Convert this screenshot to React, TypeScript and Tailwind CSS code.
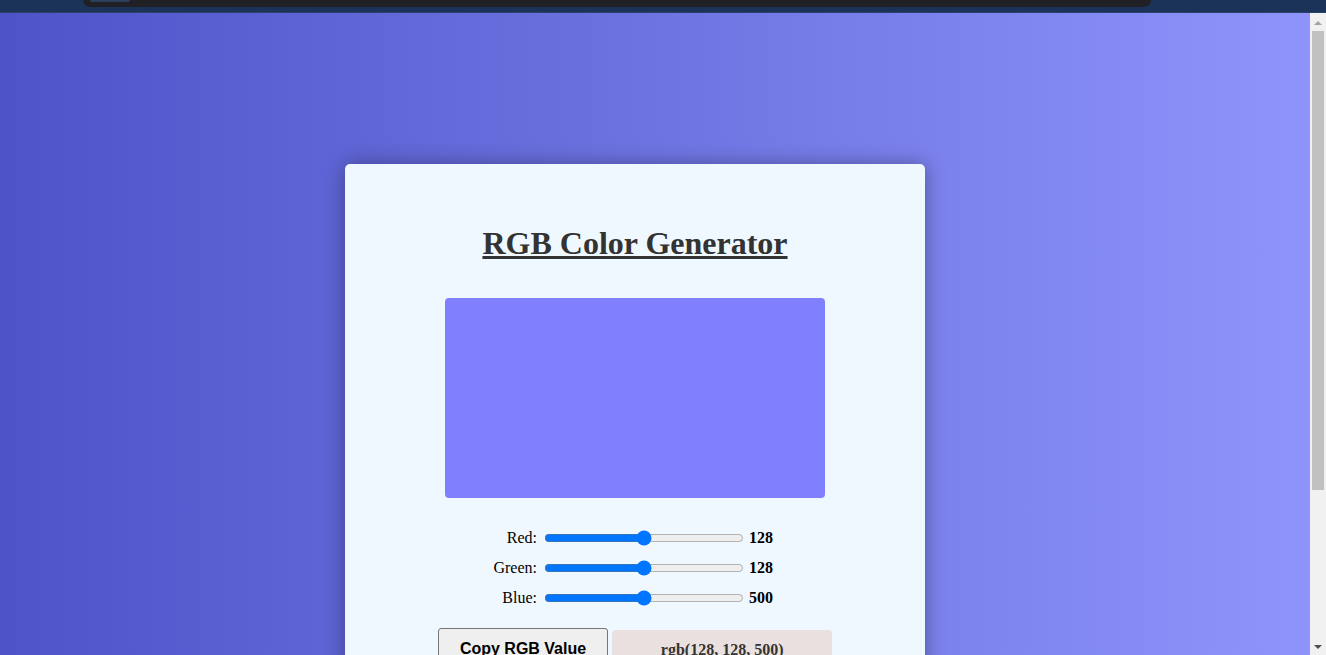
import { useState } from "react";

const serif = { fontFamily: '"Liberation Serif", "Times New Roman", serif' };

function SliderRow({
  label,
  max,
  value,
  onChange,
}: {
  label: string;
  max: number;
  value: number;
  onChange: (v: number) => void;
}) {
  return (
    <div className="flex h-[30px] items-center">
      <label className="w-[92px] text-right text-[16px] text-black">{label}</label>
      <input
        type="range"
        min={0}
        max={max}
        value={value}
        onChange={(e) => onChange(Number(e.target.value))}
        className="ml-[7px] m-0 h-[16px] w-[200px]"
      />
      <span className="ml-[5px] text-[16px] font-bold text-black">{value}</span>
    </div>
  );
}

function TopStrip() {
  return (
    <div className="relative h-[13px] shrink-0 border-b border-[#2a4168] bg-[#1b3358]">
      <div className="absolute left-[83px] top-0 h-[7px] w-[1068px] rounded-b-[8px] bg-[#202124]">
        <div className="ml-[7px] h-[2px] w-[40px] rounded-b-[4px] bg-[#2c3e5c]" />
      </div>
    </div>
  );
}

function FakeScrollbar() {
  return (
    <div className="flex w-[16px] shrink-0 flex-col items-center bg-[#f1f1f1]">
      <div className="mt-[8px] h-0 w-0 border-x-[4px] border-b-[4px] border-x-transparent border-b-[#a3a3a3]" />
      <div className="mt-[6px] h-[459px] w-[12px] bg-[#c1c1c1]" />
      <div className="flex-1" />
      <div className="mb-[6px] h-0 w-0 border-x-[4px] border-t-[4px] border-x-transparent border-t-[#505050]" />
    </div>
  );
}

export default function App() {
  const [red, setRed] = useState(128);
  const [green, setGreen] = useState(128);
  const [blue, setBlue] = useState(500);

  const rgb = `rgb(${red}, ${green}, ${blue})`;

  return (
    <div className="flex h-[655px] w-[1326px] flex-col overflow-hidden" style={serif}>
      <TopStrip />
      <div className="flex min-h-0 flex-1">
        <div className="min-w-0 flex-1 overflow-hidden bg-gradient-to-r from-[#4e54c8] to-[#8f94fb]">
          <div className="ml-[345px] mt-[151px] w-[580px] rounded-[5px] bg-[#f0f8ff] pb-[40px] pt-[55px] shadow-[0_0_20px_rgba(0,0,0,0.35)]">
            <h1 className="m-0 text-center text-[32px] font-bold leading-normal text-[#333] underline">
              RGB Color Generator
            </h1>

            <div
              className="mx-auto mt-[31px] h-[200px] w-[380px] rounded-[4px]"
              style={{ backgroundColor: rgb }}
            />

            <div className="mx-auto mt-[25px] w-[380px]">
              <SliderRow label="Red:" max={255} value={red} onChange={setRed} />
              <SliderRow label="Green:" max={255} value={green} onChange={setGreen} />
              <SliderRow label="Blue:" max={1000} value={blue} onChange={setBlue} />
            </div>

            <div className="mt-[15px] flex items-start justify-center gap-[4px]">
              <button
                className="rounded-[3px] border border-[#767676] bg-[#efefef] px-[21px] pb-[10px] pt-[8px] text-[16px] font-bold text-black"
                style={{ fontFamily: '"Liberation Sans", Arial, sans-serif' }}
              >
                Copy RGB Value
              </button>
              <div className="mt-[2px] w-[220px] rounded-[4px] bg-[#ebe0e0] pb-[10px] pt-[8px] text-center text-[16px] font-bold text-[#333]">
                {rgb}
              </div>
            </div>
          </div>
        </div>
        <FakeScrollbar />
      </div>
    </div>
  );
}
